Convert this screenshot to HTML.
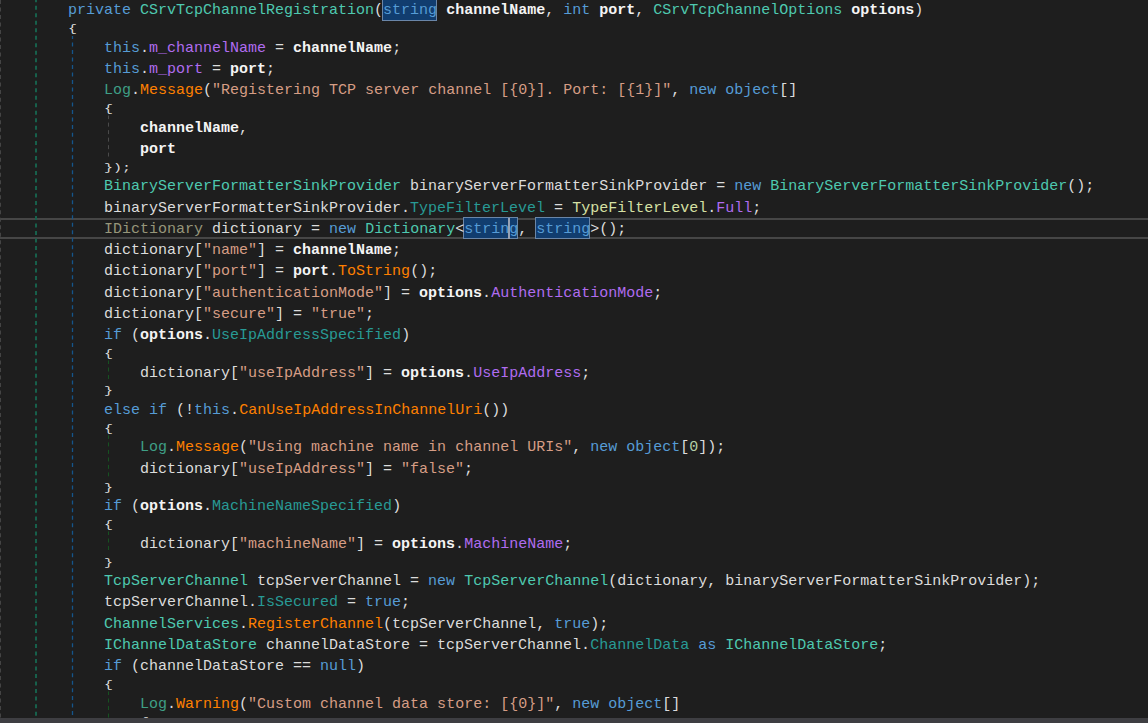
<!DOCTYPE html>
<html lang="en"><head><meta charset="utf-8"><title>CSrvTcpChannelRegistration</title>
<style>
html,body{margin:0;padding:0;background:#1e1e1e;}
body{width:1148px;height:723px;overflow:hidden;position:relative;font-family:"Liberation Mono","DejaVu Sans Mono",monospace;font-size:15px;color:#dcdcdc;}
.l{position:absolute;left:-4px;white-space:pre;height:21px;line-height:21px;}
.c{transform:scaleY(.75);transform-origin:0 0;}
.k{color:#569cd6}
.t{color:#4ec9b0}
.j{color:#d6e0a4}
.s{color:#d69d85}
.p{color:#f4f4f4;font-weight:bold}
.f{color:#b06cf0}
.m{color:#ff8000}
.n{color:#b5cea8}
.r{color:#289a95}
.g{color:#3f9f86}
.i{color:#96967a}
.h{color:#569cd6}
.cur{position:absolute;left:0;width:1148px;top:218px;height:16.5px;border-top:2px solid #464646;border-bottom:2px solid #464646;}
.hl{position:absolute;box-sizing:border-box;background:#113d6f;border:1px solid #6a86a8;height:22px;width:55px;}
.caret{position:absolute;left:508px;top:218px;width:2px;height:21px;background:#98a2b4;}
.sb{position:absolute;left:0;top:718px;width:1148px;height:5px;background:#3e3e42;}
svg{position:absolute;left:0;top:0;}
</style></head>
<body>
<div class="cur"></div>
<div class="hl" style="left:382px;top:-1px"></div>
<div class="hl" style="left:463px;top:217px"></div>
<div class="hl" style="left:535px;top:217px"></div>
<svg width="1148" height="723" viewBox="0 0 1148 723"><line x1="0" y1="0" x2="0" y2="718" stroke="#444444" stroke-width="2" stroke-dasharray="4 3.51" stroke-dashoffset="0"/><line x1="36" y1="0" x2="36" y2="718" stroke="#17604b" stroke-width="2" stroke-dasharray="4 3.51" stroke-dashoffset="1.81"/><line x1="72.5" y1="36" x2="72.5" y2="718" stroke="#15558a" stroke-width="1.3" stroke-dasharray="4 3.51" stroke-dashoffset="1.0"/><line x1="108.5" y1="115.5" x2="108.5" y2="156.5" stroke="#4a4a4a" stroke-width="1" stroke-dasharray="4 3.51" stroke-dashoffset="0.4"/><line x1="108.5" y1="360.4" x2="108.5" y2="380.1" stroke="#165221" stroke-width="1" stroke-dasharray="4 3.51" stroke-dashoffset="0.4"/><line x1="108.5" y1="435.3" x2="108.5" y2="476.3" stroke="#165221" stroke-width="1" stroke-dasharray="4 3.51" stroke-dashoffset="0.4"/><line x1="108.5" y1="531.4" x2="108.5" y2="551.2" stroke="#165221" stroke-width="1" stroke-dasharray="4 3.51" stroke-dashoffset="0.4"/><line x1="108.5" y1="691.4" x2="108.5" y2="718" stroke="#165221" stroke-width="1" stroke-dasharray="4 3.51" stroke-dashoffset="0.4"/></svg>
<div class="l" style="top:0px">        <span class="k">private</span> <span class="t">CSrvTcpChannelRegistration</span>(<span class="h">string</span> <span class="p">channelName</span>, <span class="k">int</span> <span class="p">port</span>, <span class="t">CSrvTcpChannelOptions</span> <span class="p">options</span>)</div>
<div class="l c" style="top:21.15px">        {</div>
<div class="l" style="top:38px">            <span class="k">this</span>.<span class="f">m_channelName</span> = <span class="p">channelName</span>;</div>
<div class="l" style="top:59px">            <span class="k">this</span>.<span class="f">m_port</span> = <span class="p">port</span>;</div>
<div class="l" style="top:80px">            <span class="g">Log</span>.<span class="m">Message</span>(<span class="s">"Registering TCP server channel [{0}]. Port: [{1}]"</span>, <span class="k">new</span> <span class="k">object</span>[]</div>
<div class="l c" style="top:101.10px">            {</div>
<div class="l" style="top:118px">                <span class="p">channelName</span>,</div>
<div class="l" style="top:139px">                <span class="p">port</span></div>
<div class="l c" style="top:159.80px">            });</div>
<div class="l" style="top:176px">            <span class="t">BinaryServerFormatterSinkProvider</span> binaryServerFormatterSinkProvider = <span class="k">new</span> <span class="t">BinaryServerFormatterSinkProvider</span>();</div>
<div class="l" style="top:198px">            binaryServerFormatterSinkProvider.<span class="r">TypeFilterLevel</span> = <span class="j">TypeFilterLevel</span>.<span class="f">Full</span>;</div>
<div class="l" style="top:219px">            <span class="i">IDictionary</span> dictionary = <span class="k">new</span> <span class="t">Dictionary</span>&lt;<span class="h">string</span>, <span class="h">string</span>&gt;();</div>
<div class="l" style="top:240px">            dictionary[<span class="s">"name"</span>] = <span class="p">channelName</span>;</div>
<div class="l" style="top:261px">            dictionary[<span class="s">"port"</span>] = <span class="p">port</span>.<span class="m">ToString</span>();</div>
<div class="l" style="top:283px">            dictionary[<span class="s">"authenticationMode"</span>] = <span class="p">options</span>.<span class="f">AuthenticationMode</span>;</div>
<div class="l" style="top:304px">            dictionary[<span class="s">"secure"</span>] = <span class="s">"true"</span>;</div>
<div class="l" style="top:325px">            <span class="k">if</span> (<span class="p">options</span>.<span class="r">UseIpAddressSpecified</span>)</div>
<div class="l c" style="top:346.00px">            {</div>
<div class="l" style="top:363px">                dictionary[<span class="s">"useIpAddress"</span>] = <span class="p">options</span>.<span class="f">UseIpAddress</span>;</div>
<div class="l c" style="top:383.45px">            }</div>
<div class="l" style="top:400px">            <span class="k">else</span> <span class="k">if</span> (!<span class="k">this</span>.<span class="m">CanUseIpAddressInChannelUri</span>())</div>
<div class="l c" style="top:420.90px">            {</div>
<div class="l" style="top:437px">                <span class="g">Log</span>.<span class="m">Message</span>(<span class="s">"Using machine name in channel URIs"</span>, <span class="k">new</span> <span class="k">object</span>[<span class="n">0</span>]);</div>
<div class="l" style="top:459px">                dictionary[<span class="s">"useIpAddress"</span>] = <span class="s">"false"</span>;</div>
<div class="l c" style="top:479.60px">            }</div>
<div class="l" style="top:496px">            <span class="k">if</span> (<span class="p">options</span>.<span class="r">MachineNameSpecified</span>)</div>
<div class="l c" style="top:517.05px">            {</div>
<div class="l" style="top:534px">                dictionary[<span class="s">"machineName"</span>] = <span class="p">options</span>.<span class="f">MachineName</span>;</div>
<div class="l c" style="top:554.50px">            }</div>
<div class="l" style="top:571px">            <span class="t">TcpServerChannel</span> tcpServerChannel = <span class="k">new</span> <span class="t">TcpServerChannel</span>(dictionary, binaryServerFormatterSinkProvider);</div>
<div class="l" style="top:592px">            tcpServerChannel.<span class="r">IsSecured</span> = <span class="k">true</span>;</div>
<div class="l" style="top:614px">            <span class="t">ChannelServices</span>.<span class="m">RegisterChannel</span>(tcpServerChannel, <span class="k">true</span>);</div>
<div class="l" style="top:635px">            <span class="t">IChannelDataStore</span> channelDataStore = tcpServerChannel.<span class="r">ChannelData</span> <span class="k">as</span> <span class="t">IChannelDataStore</span>;</div>
<div class="l" style="top:656px">            <span class="k">if</span> (channelDataStore == <span class="k">null</span>)</div>
<div class="l c" style="top:676.95px">            {</div>
<div class="l" style="top:694px">                <span class="g">Log</span>.<span class="m">Warning</span>(<span class="s">"Custom channel data store: [{0}]"</span>, <span class="k">new</span> <span class="k">object</span>[]</div>
<div class="l c" style="top:714.40px">                {</div>
<div class="caret"></div>
<div class="sb"></div>
</body></html>
